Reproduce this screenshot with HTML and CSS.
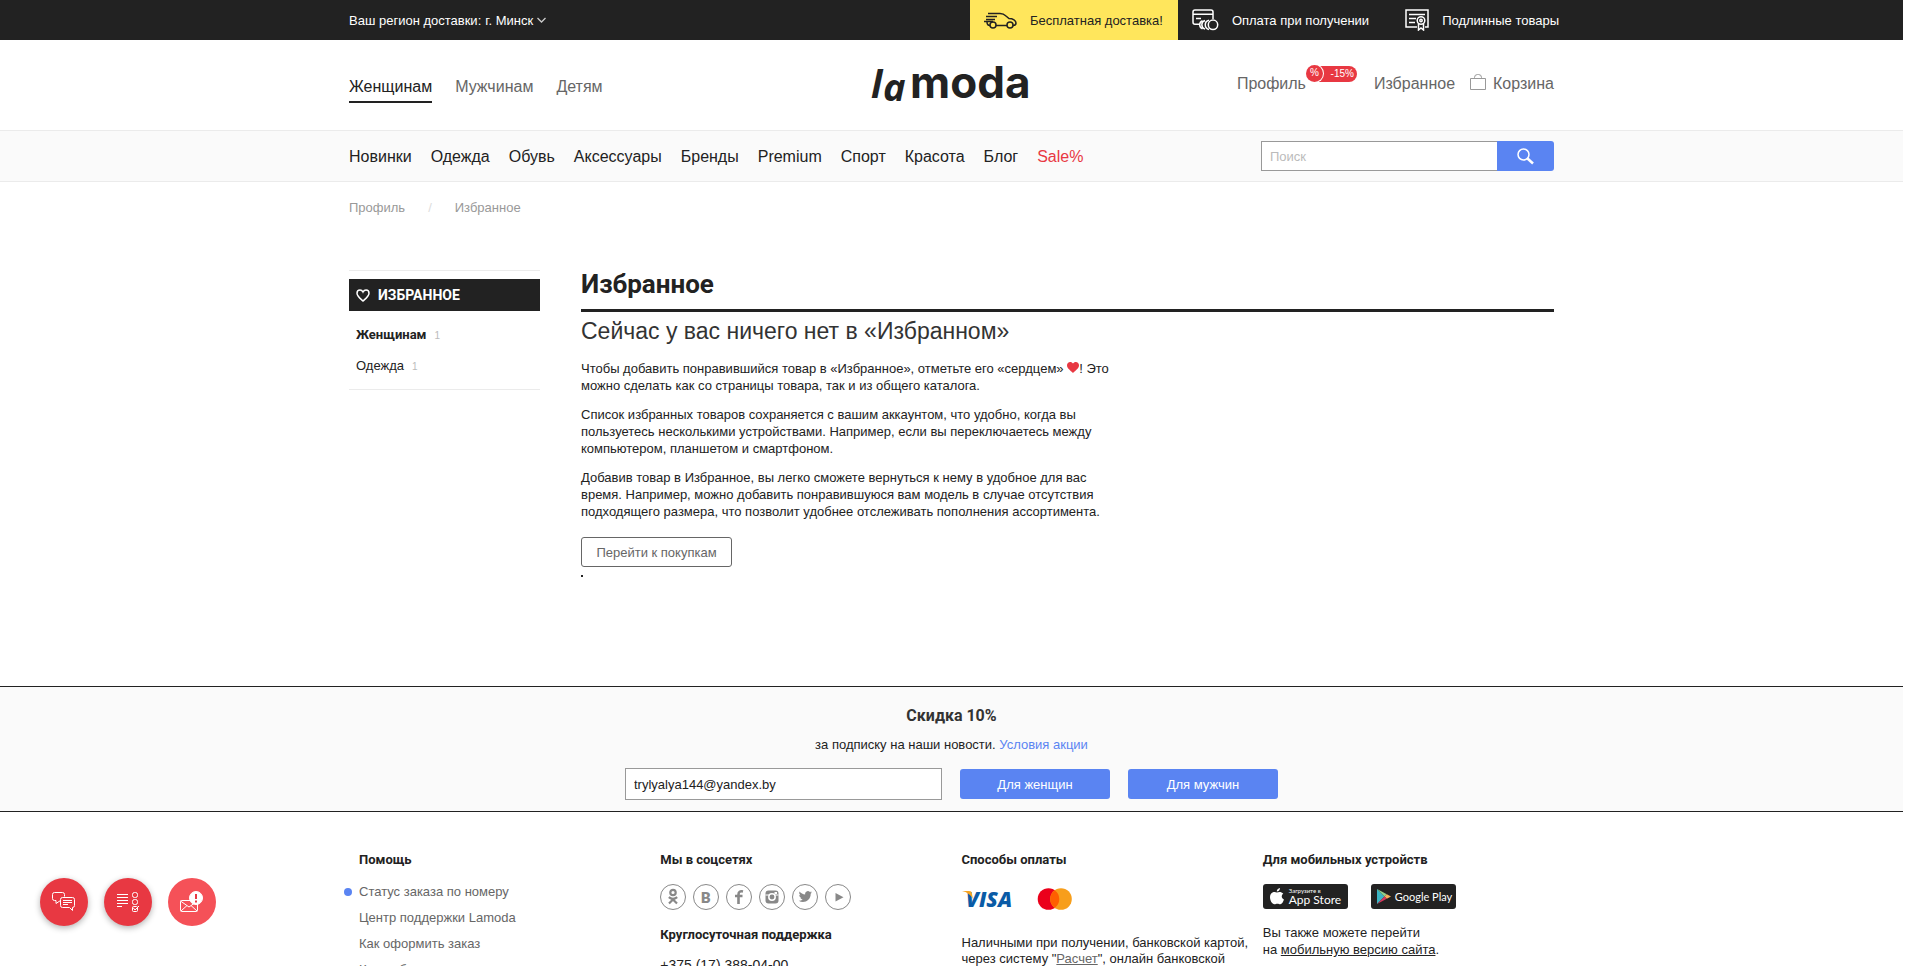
FILE: index.html
```html
<!DOCTYPE html>
<html lang="ru">
<head>
<meta charset="utf-8">
<title>Избранное — Lamoda</title>
<link rel="stylesheet" href="styles.css">
</head>
<body>
<div class="page">
  <div class="topbar">
    <div class="wrap topbar-row">
      <button class="region" type="button">Ваш регион доставки: <span>г. Минск</span>
        <svg width="9" height="6" viewBox="0 0 9 6" fill="none" stroke="#ccc" stroke-width="1.300"><path d="M.5 1l4 4 4-4"/></svg>
      </button>
      <div class="perks">
        <a class="perk perk-accent" href="#">
          <svg width="33" height="17" viewBox="0 0 33 17" fill="none" stroke="#222" stroke-width="1.500"><path d="M4 1.500h12c2.500 0 4.500 1 6 2.500l3 2.500c4 0 7 2 7 4.500 0 1.500-1 2.500-3 2.500M23 13.500H12M2 4.500h11M2 7.500h9M0 9.500h9M3 10c0 2 .5 3.500 3 3.500"/><circle cx="9" cy="13" r="3"/><circle cx="26" cy="13" r="3"/></svg>
          <span>Бесплатная доставка!</span>
        </a>
        <a class="perk" href="#">
          <svg width="27" height="22" viewBox="0 0 27 22" fill="none" stroke="#fff" stroke-width="1.500"><path d="M8 15.300H3c-1.500 0-2-.8-2-2V3c0-1.500.8-2 2-2h16c1.300 0 2 .7 2 2v7M1 5.300h20M4 9.500h5"/><path d="M13 11.500a4.500 4.500 0 0 0 0 8.600M17 11.200a4.700 4.700 0 0 0 0 9.200M10.500 11.700a4.400 4.400 0 0 0 0 8.200"/><circle cx="21" cy="15.800" r="4.700"/></svg>
          <span>Оплата при получении</span>
        </a>
        <a class="perk" href="#">
          <svg width="24" height="22" viewBox="0 0 24 22" fill="none" stroke="#fff" stroke-width="1.500"><path d="M12 18H1V1h22v17h-3M4 5.500h16M4 9.500h7M4 13.500h6"/><circle cx="16" cy="11.500" r="3.800"/><circle cx="16" cy="11.500" r="1.200"/><path d="M13.500 14.500V21l2.500-2 2.500 2v-6.500"/></svg>
          <span>Подлинные товары</span>
        </a>
      </div>
    </div>
  </div>

  <header class="header wrap">
    <nav class="genders">
      <a class="active" href="#">Женщинам</a>
      <a href="#">Мужчинам</a>
      <a href="#">Детям</a>
    </nav>
    <a class="logo" href="#" aria-label="lamoda">
      <svg width="162" height="36" viewBox="0 0 162 36">
        <text class="logo-la" x="0" y="31">l</text>
        <text class="logo-la" x="12" y="34">a</text>
        <text class="logo-moda" x="39" y="31">moda</text>
      </svg>
    </a>
    <nav class="user">
      <a class="profile" href="#">Профиль<span class="badge"><i>%</i>-15%</span></a>
      <a href="#">Избранное</a>
      <a class="cart" href="#"><svg width="16" height="16" viewBox="0 0 16 16" fill="none" stroke="#999"><path d="M.5 4.500h15v11H.5zM4.500 4.500V3.500a3 3 0 0 1 3-3h1a3 3 0 0 1 3 3v1"/></svg>Корзина</a>
    </nav>
  </header>

  <div class="navbar">
    <div class="wrap navbar-row">
      <nav class="menu">
        <a href="#">Новинки</a><a href="#">Одежда</a><a href="#">Обувь</a><a href="#">Аксессуары</a><a href="#">Бренды</a><a href="#">Premium</a><a href="#">Спорт</a><a href="#">Красота</a><a href="#">Блог</a><a class="sale" href="#">Sale%</a>
      </nav>
      <form class="search">
        <input type="search" placeholder="Поиск" aria-label="Поиск">
        <button type="button" aria-label="Найти"><svg width="17" height="17" viewBox="0 0 17 17" fill="none" stroke="#fff"><circle cx="6.500" cy="6.500" r="5.500" stroke-width="1.500"/><path d="M10.500 10.500l5.500 5" stroke-width="2.500"/></svg></button>
      </form>
    </div>
  </div>

  <nav class="crumbs wrap"><a href="#">Профиль</a><span>/</span><a href="#">Избранное</a></nav>

  <main class="content wrap">
    <aside class="side">
      <a class="side-title" href="#"><svg width="14" height="13" viewBox="0 0 14 13" fill="none" stroke="#fff" stroke-width="1.500"><path d="M7 12C4.500 9.700 1 7.200 1 4.200 1 2.300 2.300 1 4 1c1.400 0 2.400.8 3 2 .6-1.200 1.600-2 3-2 1.700 0 3 1.300 3 3.200 0 3-3.500 5.500-6 7.800z"/></svg>Избранное</a>
      <ul>
        <li><a href="#"><b>Женщинам</b></a><small>1</small></li>
        <li><a href="#">Одежда</a><small>1</small></li>
      </ul>
    </aside>
    <section class="main">
      <h1>Избранное</h1>
      <h2>Сейчас у вас ничего нет в «Избранном»</h2>
      <p>Чтобы добавить понравившийся товар в «Избранное», отметьте его «сердцем» <svg width="12" height="11" viewBox="0 0 12 11" fill="#e83842"><path d="M6 11C3.500 8.500 0 6.500 0 3.300 0 1.400 1.400 0 3.200 0 4.400 0 5.400.6 6 1.600 6.600.6 7.600 0 8.800 0 10.600 0 12 1.400 12 3.300 12 6.500 8.500 8.500 6 11z"/></svg>! Это<br>можно сделать как со страницы товара, так и из общего каталога.</p>
      <p>Список избранных товаров сохраняется с вашим аккаунтом, что удобно, когда вы<br>пользуетесь несколькими устройствами. Например, если вы переключаетесь между<br>компьютером, планшетом и смартфоном.</p>
      <p>Добавив товар в Избранное, вы легко сможете вернуться к нему в удобное для вас<br>время. Например, можно добавить понравившуюся вам модель в случае отсутствия<br>подходящего размера, что позволит удобнее отслеживать пополнения ассортимента.</p>
      <button class="shop" type="button">Перейти к покупкам</button>
      <div class="dot-end"></div>
    </section>
  </main>

  <section class="news">
    <h3>Скидка 10%</h3>
    <p>за подписку на наши новости. <a href="#">Условия акции</a></p>
    <form>
      <input type="email" value="trylyalya144@yandex.by" aria-label="Электронная почта">
      <button type="button">Для женщин</button>
      <button type="button">Для мужчин</button>
    </form>
  </section>

  <footer class="footer wrap">
    <div>
      <h4>Помощь</h4>
      <ul class="links">
        <li class="marked"><a href="#">Статус заказа по номеру</a></li>
        <li><a href="#">Центр поддержки Lamoda</a></li>
        <li><a href="#">Как оформить заказ</a></li>
        <li><a href="#">Как выбрать размер</a></li>
      </ul>
    </div>
    <div>
      <h4>Мы в соцсетях</h4>
      <div class="social">
        <a href="#" aria-label="Одноклассники"><svg viewBox="0 0 26 26"><g fill="none" stroke="#888" stroke-width="2.200"><circle cx="13" cy="8.500" r="2.700"/><path d="M8.800 13.200c2.500 1.900 5.900 1.900 8.400 0M9 19.500l4-4 4 4"/></g></svg></a>
        <a href="#" aria-label="ВКонтакте"><svg viewBox="0 0 26 26"><text x="8" y="18.500" class="glyph">B</text></svg></a>
        <a href="#" aria-label="Facebook"><svg viewBox="0 0 26 26"><path d="M17 7.500c-2.800-.7-4.500.3-4.500 3V20M9 12h7.500" fill="none" stroke="#888" stroke-width="2.600"/></svg></a>
        <a href="#" aria-label="Instagram"><svg viewBox="0 0 26 26"><rect x="6.500" y="6.500" width="13" height="13" rx="3" fill="#888"/><path d="M6.500 11h4M15.500 11h4" stroke="#fff"/><circle cx="13" cy="13" r="3.200" fill="#888" stroke="#fff" stroke-width="1.500"/><rect x="15.500" y="8" width="2.500" height="2" fill="#fff"/></svg></a>
        <a href="#" aria-label="Twitter"><svg viewBox="0 0 26 26"><path fill="#888" d="M20 8.300c-.5.300-1 .4-1.500.4.500-.3.900-.8 1.100-1.400-.5.300-1.100.5-1.700.7a2.800 2.800 0 0 0-4.800 2.500c-2.200-.1-4.200-1.200-5.500-2.900-.7 1.200-.4 2.800.8 3.600-.4 0-.8-.1-1.200-.3 0 1.300.9 2.400 2.200 2.700-.4.100-.8.100-1.200 0 .3 1.100 1.400 1.900 2.500 1.900-1.200.9-2.500 1.300-4 1.200 4.800 2.900 12 .4 12-7 .5-.4 1-.9 1.300-1.400z"/></svg></a>
        <a href="#" aria-label="YouTube"><svg viewBox="0 0 26 26"><path fill="#888" d="M10.500 9l8 4.200-8 4.300z"/></svg></a>
      </div>
      <h4>Круглосуточная поддержка</h4>
      <p class="phone">+375 (17) 388-04-00</p>
    </div>
    <div>
      <h4>Способы оплаты</h4>
      <div class="pay">
        <svg width="50" height="22" viewBox="0 0 50 22" role="img" aria-label="Visa"><text x="4" y="19" class="visa">VISA</text><path d="M0 3h7c2 0 2.500.8 2.800 2.200L11 11C9 7 5 4 0 3z" fill="#f7a420"/></svg>
        <svg width="36" height="22" viewBox="0 0 36 22" role="img" aria-label="Mastercard"><circle cx="11.500" cy="11" r="10.800" fill="#eb001b"/><circle cx="24" cy="11" r="10.800" fill="#f79e1b"/><path d="M17.750 2.200a10.800 10.800 0 0 1 0 17.600 10.800 10.800 0 0 1 0-17.600z" fill="#ff5f00"/></svg>
      </div>
      <p class="pay-text">Наличными при получении, банковской картой,<br>через систему "<a href="#">Расчет</a>", онлайн банковской</p>
    </div>
    <div>
      <h4>Для мобильных устройств</h4>
      <div class="stores">
        <a href="#"><svg width="14" height="17" viewBox="0 0 14 17" fill="#fff"><path d="M10 0c.1 1.800-1.300 3.500-3.200 3.500C6.600 1.800 8.200.2 10 0zM13.300 5.800c-2.300 1.400-2 4.700.7 5.700-.7 2-2.100 4.800-3.700 4.800-1 0-1.600-.6-2.900-.6s-1.900.6-2.900.6C2 16.300 0 12.300 0 9.300c0-5 4.300-6.200 6.900-4.700 2-1.100 4.700-1 6.400 1.200z"/></svg><span><small>Загрузите в</small>App Store</span></a>
        <a class="play" href="#"><svg width="14" height="15" viewBox="0 0 15 16"><path d="M0 0v16l8-8z" fill="#3bb5c4"/><path d="M0 0l10.500 5.700L8 8z" fill="#8fd08a"/><path d="M10.500 5.700L15 8l-4.500 2.400L8 8z" fill="#f7b05b"/><path d="M0 16l10.500-5.600L8 8z" fill="#d8385e"/></svg><span>Google Play</span></a>
      </div>
      <p class="mobile">Вы также можете перейти<br>на <a href="#">мобильную версию сайта</a>.</p>
    </div>
  </footer>

  <div class="floats">
    <button type="button" aria-label="Чат"><svg width="24" height="20" viewBox="0 0 24 20" fill="none" stroke="#fff"><path d="M8.500 8.500L4 11.500V8.500H2.500a2 2 0 0 1-2-2v-4a2 2 0 0 1 2-2h8a2 2 0 0 1 2 2v2"/><path d="M10.500 5.500h10a2 2 0 0 1 2 2v6a2 2 0 0 1-2 2V18.500l-3-3h-7a2 2 0 0 1-2-2v-6a2 2 0 0 1 2-2zM11 8.500h9M11 10.500h9M11 12.500h5"/></svg></button>
    <button type="button" aria-label="Опрос"><svg width="22" height="20" viewBox="0 0 22 20" fill="none" stroke="#fff"><path d="M0 2.500h11M0 5.500h11M0 8.500h11M0 11.500h11M0 14.500h5"/><rect x="15.500" y=".5" width="5" height="5" rx="2"/><rect x="15.500" y="7.500" width="5" height="5" rx="2"/><rect x="15.500" y="14.500" width="5" height="5" rx="1"/><path d="M16 15.500l2 2.500 4-4"/></svg></button>
    <button class="light" type="button" aria-label="Сообщение"><svg width="24" height="22" viewBox="0 0 24 22" fill="none" stroke="#fff"><rect x=".5" y="9.500" width="17" height="11" rx="1"/><path d="M.5 10l8.500 6 8.500-6M1 20l6-5.500M17 20l-6-5.500"/><circle cx="16" cy="7" r="6.500" fill="#fff"/><path d="M16 3v5M16 9.500v2" stroke="#e83842" stroke-width="2"/></svg></button>
  </div>
</div>
</body>
</html>
```
FILE: styles.css
```css
* { box-sizing: border-box; }
body {
  margin: 0;
  font: 13px/17px "Liberation Sans", Arial, sans-serif;
  color: #222;
  background: #fff;
}
a { color: inherit; text-decoration: none; }
h1, h2, h3, h4, p, ul { margin: 0; padding: 0; font-size: inherit; }
h1, h3, h4, b, .side-title { font-family: Roboto, sans-serif; }
ul { list-style: none; }
button, input { font: inherit; color: inherit; margin: 0; }
button { border: 0; background: none; padding: 0; cursor: pointer; }

.page { height: 100vh; overflow: hidden; padding-right: 17px; }
.wrap { max-width: 1205px; margin: 0 auto; }

.topbar { background: #222; color: #fff; }
.topbar-row { display: flex; justify-content: space-between; height: 40px; }
.region { display: flex; align-items: center; gap: 4px; }
.perks { display: flex; margin-right: -5px; }
.perk { display: flex; align-items: center; gap: 13px; padding-left: 14px; }
.perk + .perk { padding-left: 36px; }
.perk-accent { background: #ffe65c; color: #222; padding-right: 15px; }
.perk-accent + .perk { padding-left: 14px; }

.header { display: grid; grid-template-columns: 1fr auto 1fr; align-items: center; height: 90px; font-size: 16px; line-height: 20px; color: #666; }
.genders { display: flex; gap: 23px; padding-top: 10px; }
.genders a { padding-bottom: 4px; border-bottom: 2px solid transparent; }
.genders .active { color: #222; border-color: #222; }
.logo svg { display: block; overflow: visible; fill: #222; }
.logo-la { font: italic 700 38px "Open Sans", sans-serif; }
.logo-moda { font: 700 44px Inter, sans-serif; }
.user { display: flex; justify-content: flex-end; padding-bottom: 3px; }
.profile { position: relative; margin-right: 68px; }
.cart { display: flex; gap: 7px; margin-left: 15px; }
.badge { position: absolute; left: 100%; top: -8px; display: flex; align-items: center; justify-content: space-between; width: 51px; height: 16px; padding-right: 3px; border-radius: 8px; background: #e83842; color: #fff; font: 10px/16px "Liberation Sans", sans-serif; }
.badge i { width: 17px; height: 17px; border-radius: 50%; background: #e83842; box-shadow: 0 0 0 1px #fff; font-style: normal; text-align: center; }

.navbar { background: #fafafa; border: solid #ebebeb; border-width: 1px 0; }
.navbar-row { display: flex; justify-content: space-between; align-items: center; height: 50px; }
.menu { display: flex; gap: 19px; font-size: 16px; }
.sale { color: #e83842; }
.search { display: flex; width: 293px; height: 30px; }
.search input { flex: 1; min-width: 0; padding: 0 8px; border: 1px solid #999; border-right: 0; background: #fff; }
.search input::placeholder { color: #bbb; }
.search button { display: grid; place-items: center; width: 57px; border-radius: 0 3px 3px 0; background: #5a84f2; }

.crumbs { display: flex; gap: 23px; padding: 17px 0; color: #999; }
.crumbs span { color: #ddd; }

.content { display: flex; gap: 41px; padding-top: 37px; }
.side { width: 191px; border: solid #ebebeb; border-width: 1px 0; padding-top: 8px; align-self: flex-start; }
.side-title { display: flex; align-items: center; gap: 8px; height: 32px; padding-left: 7px; background: #222; color: #fff; font-size: 14px; font-weight: 700; text-transform: uppercase; }
.side ul { display: grid; gap: 14px; padding: 15px 7px; }
.side li { display: flex; align-items: baseline; gap: 8px; height: 17px; }
.side small { font-size: 10px; color: #bbb; }
.main { flex: 1; }
.main h1 { font-size: 26px; line-height: 28px; padding-bottom: 11px; border-bottom: 3px solid #222; }
.main h2 { font-size: 23px; line-height: 28px; font-weight: 400; padding: 5px 0 15px; color: #333; }
.main p { margin: 0 0 12px; }
.shop { width: 151px; height: 30px; margin-top: 5px; border: 1px solid #666; border-radius: 3px; color: #666; }
.dot-end { width: 2px; height: 2px; margin-top: 8px; background: #222; }

.news { margin-top: 109px; padding: 19px 0 11px; border: solid #222; border-width: 1px 0; background: #fafafa; text-align: center; }
.news h3 { font-size: 16px; line-height: 20px; color: #333; }
.news p { margin: 10px 0 15px; }
.news a { color: #5a84f2; }
.news form { display: flex; justify-content: center; align-items: center; gap: 18px; }
.news input { width: 317px; height: 32px; padding: 0 8px; border: 1px solid #999; background: #fff; }
.news button { width: 150px; height: 30px; border-radius: 3px; background: #5a84f2; color: #fff; }

.footer { display: grid; grid-template-columns: repeat(4, 1fr); padding-top: 39px; }
.footer > div { padding-left: 10px; white-space: nowrap; }
.footer h4 { font-weight: 700; }
.links { display: grid; gap: 9px; padding-top: 15px; color: #666; }
.marked { position: relative; }
.marked::before { content: ""; position: absolute; left: -15px; top: 5px; width: 8px; height: 8px; border-radius: 50%; background: #5a84f2; }
.social { display: flex; gap: 7px; padding: 16px 0; }
.social a { width: 26px; height: 26px; border-radius: 50%; outline: 1px solid #888; outline-offset: -1px; }
.social svg { display: block; }
.glyph { font: 900 15px Roboto, sans-serif; fill: #888; }
.phone { padding-top: 14px; font-size: 14px; }
.pay { display: flex; align-items: center; gap: 25px; padding: 20px 0 25px; }
.visa { font: italic 900 21px "Open Sans", sans-serif; fill: #0a5ba6; }
.pay-text { line-height: 16px; }
.pay-text a { color: #666; text-decoration: underline; }
.stores { display: flex; gap: 23px; padding: 16px 0 15px; }
.stores a { display: flex; align-items: center; gap: 5px; width: 85px; height: 25px; padding: 0 7px; border-radius: 3px; background: #222; color: #fff; font: 12px/12px Lato, sans-serif; }
.stores .play { gap: 4px; padding: 0 6px; font-size: 11px; }
.stores svg { flex: none; }
.stores small { display: block; font-size: 6px; line-height: 7px; }
.mobile a { text-decoration: underline; }

.floats { position: fixed; left: 40px; bottom: 40px; display: flex; gap: 16px; }
.floats button { display: grid; place-items: center; width: 48px; height: 48px; border-radius: 50%; background: #e83842; box-shadow: 0 2px 6px rgba(0, 0, 0, .3); }
.floats .light { background: #f55158; box-shadow: none; }
```
